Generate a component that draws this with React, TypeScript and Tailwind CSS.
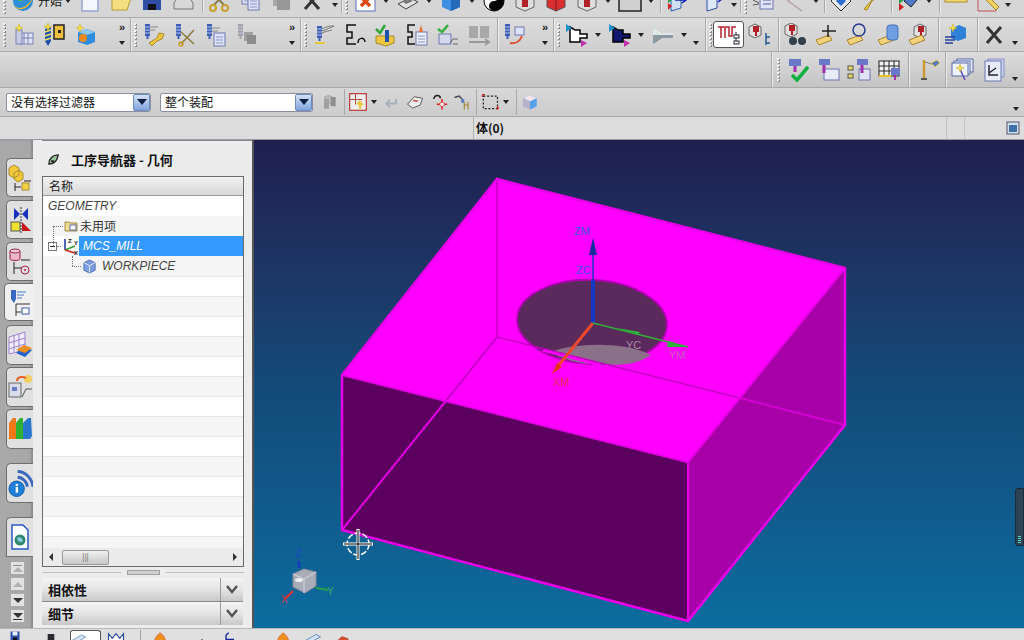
import type { ReactNode } from "react";

const cjk = "font-['Noto_Sans_CJK_SC','Liberation_Sans',sans-serif]";

// little helper for the blue "tool" stack that appears on lots of CAM icons
const Tool = ({ x = 3, y = 1, c = "#3f5fb5" }: { x?: number; y?: number; c?: string }) => (
  <g>
    <rect x={x} y={y} width="5" height="12" fill={c} />
    <path d={`M${x} ${y + 3}h5M${x} ${y + 6}h5M${x} ${y + 9}h5`} stroke="#b8c4e8" />
    <path d={`M${x + 2.5} ${y + 12}v3`} stroke={c} strokeWidth="2" />
  </g>
);
const Tag = () => <path d="M2 17l13-5 3 5-13 5z" fill="#f2d27a" stroke="#a8842c" />;
const Star = ({ x = 8, y = 5 }: { x?: number; y?: number }) => (
  <path d={`M${x} ${y - 4}l1 3 3 1-3 1-1 3-1-3-3-1 3-1z`} fill="#f7e04a" stroke="#c9a820" strokeWidth=".5" />
);
const Doc = ({ x = 8, y = 8, c = "#dfe4f8" }: { x?: number; y?: number; c?: string }) => (
  <g>
    <rect x={x} y={y} width="11" height="13" fill={c} stroke="#6b76b0" />
    <path d={`M${x + 2} ${y + 4}h7M${x + 2} ${y + 7}h7M${x + 2} ${y + 10}h7`} stroke="#8a94c8" />
  </g>
);
const RedBox = ({ x = 5, y = 3 }: { x?: number; y?: number }) => (
  <g>
    <path d={`M${x} ${y + 3}l6-3 6 3v8l-6 3-6-3z`} fill="#e5dede" stroke="#666" />
    <path d={`M${x + 4} ${y + 2}h6v6h-2v4h-2v-4h-2z`} fill="#b02028" />
  </g>
);

const icons: Record<string, ReactNode> = {
  globe: (
    <>
      <circle cx="12" cy="12" r="10" fill="#2f8fd8" />
      <path d="M5 8c5-5 10-3 12 0-3 1-4 4-8 4-2 0-3-2-4-4z" fill="#59b04a" />
      <path d="M3 17c6 4 13 2 19-9-2 9-12 17-19 9z" fill="#f0b428" />
    </>
  ),
  doc: <rect x="4" y="2" width="16" height="20" fill="#f4f6ff" stroke="#9aa4d8" strokeWidth="1.5" />,
  folder: <path d="M3 21V8l4-2 2-3h11l-1 5 3 1-4 12z" fill="#f4de82" stroke="#b89a38" />,
  save: (
    <>
      <rect x="3" y="3" width="18" height="18" fill="#2d4fa8" />
      <rect x="7" y="3" width="10" height="8" fill="#e8ecf8" />
      <rect x="8" y="15" width="8" height="6" fill="#111" />
    </>
  ),
  print: (
    <>
      <path d="M3 14l4-6h11l4 6v6H3z" fill="#d8d8d8" stroke="#777" />
      <path d="M7 8l2-5h9l-1 5z" fill="#fff" stroke="#888" />
    </>
  ),
  scissors: (
    <>
      <path d="M5 3l12 13M19 3L7 16" stroke="#8a7a50" strokeWidth="2" />
      <circle cx="6" cy="19" r="3" fill="none" stroke="#c8a030" strokeWidth="2" />
      <circle cx="18" cy="19" r="3" fill="none" stroke="#c8a030" strokeWidth="2" />
    </>
  ),
  copy: (
    <>
      <Doc x={4} y={2} />
      <Doc x={10} y={8} />
    </>
  ),
  paste: (
    <>
      <rect x="4" y="3" width="13" height="14" fill="#a8a8a8" />
      <rect x="8" y="7" width="13" height="14" fill="#989898" />
    </>
  ),
  x: <path d="M5 4l14 16M19 4L5 20" stroke="#333" strokeWidth="3" />,
  redX: (
    <>
      <rect x="3" y="3" width="19" height="19" fill="#fff" stroke="#5a70c0" />
      <path d="M8 8l9 9M17 8l-9 9" stroke="#e04818" strokeWidth="3.5" />
    </>
  ),
  plate: (
    <>
      <path d="M2 15l12-6 8 4-12 7z" fill="#e4e4e4" stroke="#444" />
      <path d="M7 13l7-3 3 2-7 3z" fill="#777" />
    </>
  ),
  cube: (
    <>
      <path d="M12 3l9 4v11l-9 4-9-4V7z" fill="#3f8fe0" />
      <path d="M12 3l9 4-9 4-9-4z" fill="#a8d4f8" />
      <path d="M12 11v11l9-4V7z" fill="#2468b8" />
    </>
  ),
  ball: (
    <>
      <circle cx="12" cy="12" r="10" fill="#fff" stroke="#000" />
      <path d="M12 2a10 10 0 0 1 0 20 5 5 0 0 1 0-10 5 5 0 0 0 0-10z" fill="#000" />
    </>
  ),
  boxA: (
    <>
      <path d="M3 6l9-4 9 4v12l-9 4-9-4z" fill="#ddd" stroke="#666" />
      <path d="M9 6h6v12H9z" fill="#b02028" />
    </>
  ),
  boxB: (
    <>
      <path d="M3 6l9-4 9 4v12l-9 4-9-4z" fill="#d83030" stroke="#555" />
      <path d="M3 6l9 4 9-4M12 10v12" stroke="#801818" fill="none" />
    </>
  ),
  square: <rect x="1" y="0" width="22" height="22" fill="#cfcfcf" stroke="#222" strokeWidth="1.5" />,
  door: (
    <>
      <path d="M6 4l10-3v18L6 22z" fill="#cfe0f4" stroke="#2d5fb0" />
      <path d="M10 11h11M17 8l4 3-4 3" stroke="#1020c0" strokeWidth="1.5" fill="none" />
      <path d="M3 14l4 3-4 4z" fill="#d02020" />
      <path d="M3 8l4 3-4 3z" fill="#28a040" />
    </>
  ),
  door2: (
    <>
      <path d="M6 4l10-3v18L6 22z" fill="#dfe8f8" stroke="#2d4fb0" />
      <path d="M9 10h12M17 7l4 3-4 3" stroke="#1020c0" strokeWidth="1.5" fill="none" />
    </>
  ),
  list: (
    <>
      <path d="M1 6l6 3M1 11l6 3M1 16l6-1" stroke="#555" />
      <rect x="8" y="2" width="13" height="18" fill="#dfe4f8" stroke="#6b76b0" />
      <path d="M11 7h8M11 11h8M11 15h8" stroke="#4a58a8" />
    </>
  ),
  angle: <path d="M14 3L5 12l14 10" fill="none" stroke="#b8a0a0" strokeWidth="1.5" />,
  diamond: (
    <>
      <path d="M12 2l10 10-10 10L2 12z" fill="#e8e8e8" stroke="#333" />
      <path d="M12 7l5 5-5 5-5-5z" fill="#2f6fd0" />
    </>
  ),
  wrenchPen: (
    <>
      <path d="M4 20l8-9 3-6 5-2-2 5-6 4-5 9z" fill="#eec83a" stroke="#a8882c" />
      <path d="M13 10l8-8" stroke="#2d3f90" strokeWidth="3" />
    </>
  ),
  doorMix: (
    <>
      <path d="M8 12l6-7 7 6-6 7z" fill="#4f78c8" stroke="#222" />
      <path d="M3 14l5 4-5 4z" fill="#d02020" />
      <path d="M3 7l5 4-5 4z" fill="#28a040" />
    </>
  ),
  ruler: (
    <>
      <rect x="1" y="5" width="22" height="8" fill="#f4d870" stroke="#a88c30" />
      <path d="M4 5v3M8 5v3M12 5v3M16 5v3M20 5v3" stroke="#776020" />
    </>
  ),
  setSquare: (
    <>
      <path d="M3 22V4c10 0 18 8 18 18z" fill="none" stroke="#c05050" />
      <path d="M8 2l16 16-3 3L5 5z" fill="#f0d060" stroke="#a08830" />
    </>
  ),
  sparkTable: (
    <>
      <rect x="9" y="10" width="13" height="11" fill="#dfe4f4" stroke="#7a84b8" />
      <path d="M13 10v11M17 10v11M9 15h13" stroke="#7a84b8" />
      <rect x="5" y="7" width="6" height="14" fill="#c8cce0" stroke="#7a84b8" />
      <Star x={8} y={5} />
    </>
  ),
  drill: (
    <>
      <path d="M3 6l6-2v14l-3 5-3-5z" fill="#2050b0" />
      <path d="M3 9l6-2M3 13l6-2M3 17l6-2" stroke="#f0e060" strokeWidth="1.5" />
      <rect x="12" y="2" width="10" height="14" fill="#eec040" stroke="#222" strokeWidth="1.5" />
      <rect x="16" y="7" width="3" height="3" fill="#222" />
      <Star x={6} y={4} />
    </>
  ),
  cubeStar: (
    <>
      <path d="M5 9l9-3 8 3v10l-8 3-9-3z" fill="#2e8cdc" />
      <path d="M5 9l9-3 8 3-8 3z" fill="#8cc8f4" />
      <circle cx="10" cy="15" r="4" fill="#f08a20" />
      <Star x={7} y={5} />
    </>
  ),
  toolWrench: (
    <>
      <Tool x={3} />
      <path d="M8 4h8M8 7h5" stroke="#888" />
      <path d="M7 20l8-5 2-5 5 1-2 5-5 2-5 5z" fill="#eec83a" stroke="#a8882c" />
    </>
  ),
  toolScissors: (
    <>
      <Tool x={3} />
      <path d="M8 21L21 7M8 9l13 12" stroke="#8a7a40" strokeWidth="1.5" />
      <circle cx="8" cy="21" r="2" fill="none" stroke="#c8a030" strokeWidth="1.5" />
    </>
  ),
  toolCopy: (
    <>
      <Tool x={3} />
      <Doc x={10} y={10} />
      <path d="M8 5h8M8 8h6" stroke="#888" />
    </>
  ),
  toolGrey: (
    <>
      <Tool x={3} c="#a4a4a4" />
      <rect x="9" y="9" width="9" height="9" fill="#a0a0a0" />
      <rect x="12" y="12" width="9" height="9" fill="#8c8c8c" />
    </>
  ),
  toolPath: (
    <>
      <Tool x={5} y={3} />
      <path d="M10 6c5-3 9-3 12-3-4 2-7 3-12 5M10 10c4-2 7-2 10-3" stroke="#777" fill="none" />
      <path d="M3 20h10" stroke="#e4c840" strokeWidth="2" />
    </>
  ),
  sArrow: (
    <>
      <path d="M13 2H4v7h5v6H4v6h9" fill="none" stroke="#111" strokeWidth="1.5" />
      <path d="M15 20c0-6 7-6 7-1" fill="none" stroke="#111" strokeWidth="1.5" />
    </>
  ),
  checkBars: (
    <>
      <path d="M2 20V13h18v7l-8 3z" fill="#eec840" stroke="#a8882c" />
      <rect x="11" y="7" width="4" height="12" fill="#2050b0" />
      <path d="M2 6l4 4 5-8" fill="none" stroke="#30a838" strokeWidth="2.5" />
    </>
  ),
  sDoc: (
    <>
      <path d="M10 2H3v7h4v5H3v7h7" fill="none" stroke="#111" strokeWidth="1.5" />
      <Doc x={11} y={9} c="#eef1fb" />
      <path d="M14 9l2-7 2 7z" fill="#e87030" />
    </>
  ),
  checkDoc: (
    <>
      <path d="M3 11h12v10H3z" fill="#d4d8ec" stroke="#6b76b0" />
      <path d="M14 20l3-4h5M17 21h5" stroke="#666" fill="none" />
      <path d="M2 6l4 3 6-7" fill="none" stroke="#38b040" strokeWidth="2.5" />
    </>
  ),
  bookGrey: (
    <>
      <rect x="2" y="3" width="9" height="12" fill="#a8a8a8" />
      <rect x="13" y="3" width="9" height="12" fill="#a8a8a8" />
      <path d="M2 19h20M18 16l4 3-4 3" stroke="#999" strokeWidth="2" fill="none" />
    </>
  ),
  toolRed: (
    <>
      <Tool x={3} />
      <path d="M8 20c6 1 10-2 12-7" stroke="#e05030" strokeWidth="2" fill="none" />
      <rect x="13" y="4" width="9" height="8" fill="#dfe4f8" stroke="#6b76b0" />
    </>
  ),
  punch: (
    <>
      <path d="M5 4l5 3h5v4h7v4h-7v4h-5l-5 0z" fill="#fff" stroke="#000" strokeWidth="1.5" />
      <path d="M1 1l6 4-6 4z" fill="#2090c8" />
      <path d="M16 17l6 3-6 4z" fill="#c030b0" />
    </>
  ),
  punchDark: (
    <>
      <path d="M5 4l5 3h5v4h7v4h-7v4h-5l-5 0z" fill="#101870" stroke="#000" strokeWidth="1.5" />
      <path d="M1 1l6 4-6 4z" fill="#2090c8" />
      <path d="M16 17l6 3-6 4z" fill="#c030b0" />
    </>
  ),
  lathe: (
    <>
      <path d="M2 4c5 3 8 5 9 6h11v5H11c-1 1-4 3-9 6z" fill="#8a9aa0" />
      <path d="M2 4c5 3 8 5 9 6h11v2H2z" fill="#dfe8e8" />
    </>
  ),
  zigTree: (
    <>
      <path d="M1 4h6M4 4v11M8 15V4h4v9h3V4h4" fill="none" stroke="#b02028" strokeWidth="1.5" />
      <path d="M19 9v12" stroke="#223" />
      <rect x="17" y="12" width="5" height="3" fill="#fff" stroke="#223" />
      <rect x="17" y="18" width="5" height="3" fill="#fff" stroke="#223" />
    </>
  ),
  boxTree: (
    <>
      <RedBox x={1} y={1} />
      <path d="M18 10v12M18 14h4M18 20h4" stroke="#245a90" strokeWidth="1.5" />
    </>
  ),
  binoculars: (
    <>
      <RedBox x={2} y={0} />
      <circle cx="10" cy="18" r="4" fill="#33404a" />
      <circle cx="19" cy="18" r="4" fill="#33404a" />
    </>
  ),
  tagPlus: (
    <>
      <Tag />
      <path d="M14 2v12M8 8h14" stroke="#222" strokeWidth="1.5" />
    </>
  ),
  tagCircle: (
    <>
      <Tag />
      <circle cx="14" cy="7" r="6" fill="none" stroke="#223c90" strokeWidth="1.5" />
    </>
  ),
  tagCyl: (
    <>
      <Tag />
      <rect x="11" y="2" width="11" height="15" rx="3" fill="#6f9fe0" stroke="#4070b8" />
    </>
  ),
  tagBox: (
    <>
      <RedBox x={7} y={1} />
      <Tag />
    </>
  ),
  toolCube: (
    <>
      <path d="M8 6l8-4 7 3v10l-8 3-7-3z" fill="#2e80d8" />
      <Star x={10} y={5} />
      <path d="M2 14h10M2 17h10M2 20h8" stroke="#283f98" strokeWidth="1.5" />
    </>
  ),
  millCheck: (
    <>
      <rect x="4" y="1" width="12" height="7" fill="#6a78c8" />
      <path d="M10 8v6" stroke="#a030b0" strokeWidth="3" />
      <path d="M7 17l5 5 11-13" fill="none" stroke="#10b040" strokeWidth="3.5" />
    </>
  ),
  millWin: (
    <>
      <rect x="8" y="11" width="15" height="11" fill="#e8ecf8" stroke="#6b76b0" />
      <rect x="3" y="1" width="11" height="6" fill="#6a78c8" />
      <path d="M8 7v8" stroke="#a030b0" strokeWidth="3" />
    </>
  ),
  millTree: (
    <>
      <rect x="12" y="11" width="11" height="11" fill="#dfe4f8" stroke="#6b76b0" />
      <rect x="1" y="8" width="5" height="4" fill="#eedc60" stroke="#555" />
      <rect x="1" y="16" width="5" height="4" fill="#eedc60" stroke="#555" />
      <rect x="10" y="1" width="11" height="6" fill="#6a78c8" />
      <path d="M15 7v8" stroke="#a030b0" strokeWidth="3" />
    </>
  ),
  tableMill: (
    <>
      <rect x="1" y="3" width="20" height="15" fill="#f4f4f4" stroke="#222" />
      <path d="M1 8h20M1 13h20M6 3v15M11 3v15M16 3v15" stroke="#222" />
      <path d="M1 18h12" stroke="#e8c820" strokeWidth="2" />
      <rect x="13" y="10" width="9" height="7" fill="#6a78c8" />
      <path d="M17 17v5" stroke="#a030b0" strokeWidth="2" />
    </>
  ),
  pole: (
    <>
      <path d="M7 2v19" stroke="#c89c30" strokeWidth="2.5" />
      <path d="M4 21h6" stroke="#555" strokeWidth="2" />
      <path d="M8 4l10 3" stroke="#777" />
      <path d="M14 5l6-3 3 3-5 4z" fill="#5a78c8" stroke="#eec840" />
    </>
  ),
  stack: (
    <>
      <rect x="6" y="1" width="16" height="13" fill="#e8ecf8" stroke="#5a68a8" />
      <rect x="3" y="3" width="16" height="13" fill="#e8ecf8" stroke="#5a68a8" />
      <rect x="1" y="5" width="16" height="13" fill="#f0f2fb" stroke="#5a68a8" />
      <path d="M9 11l5 11" stroke="#5a48b0" strokeWidth="1.5" />
      <Star x={9} y={10} />
    </>
  ),
  chartDoc: (
    <>
      <rect x="6" y="1" width="16" height="18" fill="#c8d0ea" stroke="#8a94c8" />
      <rect x="3" y="3" width="16" height="20" fill="#e8ecf8" stroke="#6b76b0" />
      <path d="M7 7v10h9M7 15l7-5" stroke="#223" strokeWidth="1.5" fill="none" />
    </>
  ),
  sel: (
    <>
      <path d="M8 14l-1-8c3-2 6-2 9 0l-1 8z" fill="#bfbfbf" stroke="#999" />
      <rect x="6" y="8" width="6" height="12" fill="#a0a0a0" />
      <rect x="14" y="6" width="6" height="11" fill="#8f8f8f" />
    </>
  ),
  snap: (
    <>
      <rect x="2" y="2" width="20" height="20" fill="#eee" stroke="#c04040" strokeWidth="1.5" />
      <path d="M9 3v12M3 9h14" stroke="#a02020" />
      <path d="M10 14l4-4 5 5-3 1v4h-3v-4z" fill="#eec840" />
    </>
  ),
  back: <path d="M20 8v6H9M12 9l-5 5 5 5" fill="none" stroke="#a8b0b8" strokeWidth="2.5" />,
  block: (
    <>
      <path d="M2 15l9-10 11 2-3 9-10 4z" fill="#eee" stroke="#333" />
      <path d="M10 9l7 1-2 2-6-1z" fill="#d05050" />
    </>
  ),
  snapArrow: (
    <>
      <path d="M5 8c1-6 8-6 9-1" fill="none" stroke="#222" strokeWidth="2" />
      <path d="M9 15h14M16 8v14" stroke="#e02020" strokeWidth="2" />
      <circle cx="16" cy="15" r="3" fill="#fff" stroke="#e02020" />
    </>
  ),
  snapTree: (
    <>
      <path d="M2 6l6-2 4 4" fill="none" stroke="#445" strokeWidth="2" />
      <rect x="11" y="8" width="4" height="5" fill="#5a78c8" />
      <path d="M15 12v10M20 12v10M15 16h5" stroke="#a08830" strokeWidth="1.5" />
    </>
  ),
  marquee: (
    <>
      <rect x="4" y="5" width="17" height="15" fill="none" stroke="#222" strokeWidth="1.5" strokeDasharray="2.5 2" />
      <path d="M3 3h3M3 3v3M20 19h3M21 17v4" stroke="#d02020" strokeWidth="1.5" />
    </>
  ),
  tinyCube: (
    <>
      <path d="M12 3l9 4v11l-9 4-9-4V7z" fill="#5aa0e8" />
      <path d="M12 3l9 4-9 4-9-4z" fill="#f4e4ee" />
      <path d="M3 7l9 4v11l-9-4z" fill="#f0c0b0" opacity=".6" />
    </>
  ),
  crown: <path d="M2 18V5l5 6 5-6 5 6 5-6v13z" fill="#fff" stroke="#2848a8" strokeWidth="1.5" />,
  flame: <path d="M3 22c0-10 5-14 9-18 5 4 9 8 9 18z" fill="#f09020" stroke="#d05018" />,
  plus: <path d="M12 14v10" stroke="#222" strokeWidth="2" />,
  blueDoor: <path d="M6 22V8l4-4M6 14h12" fill="none" stroke="#1020a0" strokeWidth="2" />,
  redChip: <path d="M3 18l9-8 9 3v9H3z" fill="#d85030" stroke="#a03018" />,
  slab: <path d="M2 14l14-8 6 3-14 8z" fill="#d8e4f4" stroke="#4070c0" />,
  darkBit: <rect x="7" y="6" width="10" height="16" fill="#2a2a30" />,
};

const Ico = ({ n, size = 24 }: { n: string; size?: number }) => (
  <svg viewBox="0 0 24 24" width={size} height={size} className="shrink-0">
    {icons[n]}
  </svg>
);

const Slot = ({ n }: { n: string }) => (
  <div className="flex w-[31px] shrink-0 items-center justify-center">
    <Ico n={n} />
  </div>
);

const Grip = () => (
  <div className="flex h-[28px] w-[7px] shrink-0 flex-col items-center justify-between self-center py-0.5">
    {[0, 1, 2, 3, 4, 5, 6].map((i) => (
      <div key={i} className="h-[2px] w-[2px] bg-[#f4f4f4] shadow-[1px_1px_0_#8c8c8c]" />
    ))}
  </div>
);

const Sep = () => <div className="w-px shrink-0 self-stretch bg-[#a9a9a9] shadow-[1px_0_0_#ececec]" />;

const Tri = () => (
  <div className="h-0 w-0 border-x-[3px] border-t-[4px] border-x-transparent border-t-[#222]" />
);

const Arrow = () => (
  <div className="flex w-[12px] shrink-0 items-center justify-center">
    <Tri />
  </div>
);

// >> on top, drop marker below
const More = () => (
  <div className="flex w-[16px] shrink-0 flex-col items-center justify-between pb-[6px] pt-[4px]">
    <span className="font-['Liberation_Sans',sans-serif] text-[11px] font-bold leading-[10px] text-[#222]">»</span>
    <Tri />
  </div>
);

const Dd = () => (
  <div className="flex w-[12px] shrink-0 flex-col items-center justify-end pb-[6px]">
    <Tri />
  </div>
);

const Select = ({ label, className }: { label: string; className: string }) => (
  <div className={`flex h-[19px] shrink-0 items-center justify-between rounded-[2px] border border-[#8b8fa0] bg-white ${className}`}>
    <span className={`${cjk} pl-1 text-[12px] leading-none text-[#111]`}>{label}</span>
    <div className="flex h-full w-[17px] items-center justify-center rounded-[2px] border border-[#6c8cc0] bg-gradient-to-b from-[#d4e2f6] to-[#7ea4dc]">
      <div className="h-0 w-0 border-x-[5px] border-t-[6px] border-x-transparent border-t-[#102040]" />
    </div>
  </div>
);

const railTabs = [
  { cls: "mt-[18px] h-[39px] w-[27px] bg-[#e0e0e0]", icon: <TabPart /> },
  { cls: "mt-[3px] h-[39px] w-[27px] bg-[#e0e0e0]", icon: <TabAssy /> },
  { cls: "mt-[3px] h-[39px] w-[27px] bg-[#e0e0e0]", icon: <TabCyl /> },
  { cls: "-ml-[2px] mt-[2px] h-[38px] w-[29px] bg-[#f0f0f0] pl-[3px]", icon: <TabOp /> },
  { cls: "mt-[4px] h-[40px] w-[27px] bg-[#e0e0e0]", icon: <TabTable /> },
  { cls: "mt-[2px] h-[40px] w-[27px] bg-[#e0e0e0]", icon: <TabMachine /> },
  { cls: "mt-[2px] h-[40px] w-[27px] bg-[#e0e0e0]", icon: <TabBooks /> },
  { cls: "mt-[14px] h-[40px] w-[27px] bg-[#e0e0e0]", icon: <TabInfo /> },
];

function TabPart() {
  return (
    <svg viewBox="0 0 24 28" width="24" height="28">
      <path d="M1 4l5-3 5 3v7l-5 3-5-3zM6 9l5-3 4 3v6l-5 3-4-3z" fill="#f0c838" stroke="#a88c30" />
      <path d="M7 19v8M7 23h6M16 17h7" stroke="#222" />
      <rect x="14" y="19" width="7" height="7" fill="#f0d040" stroke="#a88c30" />
    </svg>
  );
}
function TabAssy() {
  return (
    <svg viewBox="0 0 24 28" width="24" height="28">
      <path d="M6 2l6 6-6 6zM20 2l-6 6 6 6z" fill="#1830c0" />
      <path d="M13 1v26" stroke="#333" strokeDasharray="2 1" />
      <rect x="3" y="16" width="9" height="9" fill="#f0e030" stroke="#555" />
      <path d="M14 16l9 9h-9z" fill="#c81818" />
    </svg>
  );
}
function TabCyl() {
  return (
    <svg viewBox="0 0 24 28" width="24" height="28">
      <path d="M2 3h10v8c0 2-10 2-10 0z" fill="#eeb8c8" stroke="#a02050" />
      <ellipse cx="7" cy="3" rx="5" ry="2" fill="#f4d0dc" stroke="#a02050" />
      <path d="M6 14v12M6 20h8M13 12h9" stroke="#222" />
      <circle cx="17" cy="22" r="4" fill="none" stroke="#b02050" />
      <circle cx="17" cy="22" r="1" fill="#b02050" />
    </svg>
  );
}
function TabOp() {
  return (
    <svg viewBox="0 0 24 28" width="24" height="28">
      <path d="M3 2v9l3 4 2-4V2z" fill="#3868c0" />
      <path d="M9 4h9M9 7h7M9 10h5" stroke="#4878c8" />
      <path d="M8 16h14M8 16v12M8 24h5" stroke="#333" />
      <rect x="14" y="20" width="7" height="6" fill="#fff" stroke="#3858a8" />
    </svg>
  );
}
function TabTable() {
  return (
    <svg viewBox="0 0 24 28" width="24" height="28">
      <path d="M1 6l16-5v18L1 23z" fill="#eeeeff" stroke="#a080d0" />
      <path d="M1 12l16-5M1 18l16-5M6 4v17M11 3v17" stroke="#a080d0" />
      <path d="M8 22l8-6 8 3-7 7z" fill="#2060d0" />
      <path d="M8 19l8-5 8 3-7 5z" fill="#f09020" />
    </svg>
  );
}
function TabMachine() {
  return (
    <svg viewBox="0 0 24 28" width="24" height="28">
      <rect x="1" y="10" width="12" height="14" fill="#d8dce8" stroke="#666" />
      <rect x="4" y="14" width="5" height="4" fill="#6a78c8" />
      <path d="M14 24l4-8h6" stroke="#555" fill="none" />
      <circle cx="20" cy="6" r="4" fill="#f4d060" />
      <path d="M9 8c0-4 5-5 9-3" fill="none" stroke="#e86020" strokeWidth="2" />
    </svg>
  );
}
function TabBooks() {
  return (
    <svg viewBox="0 0 24 28" width="24" height="28">
      <path d="M1 8l4-5h3v21H1z" fill="#f07818" />
      <path d="M8 8l4-5h3v21H8z" fill="#30b030" />
      <path d="M15 8l5-5h3l1 18-2 3h-7z" fill="#2878d0" />
    </svg>
  );
}
function TabInfo() {
  return (
    <svg viewBox="0 0 26 30" width="26" height="30">
      <path d="M10 3c8 0 15 7 16 16M10 9c5 0 10 5 10 10" fill="none" stroke="#3868c0" strokeWidth="3" />
      <circle cx="9" cy="21" r="8" fill="#2080d8" stroke="#1858a8" />
      <rect x="8" y="19" width="2.5" height="6" fill="#fff" />
      <rect x="8" y="16" width="2.5" height="2" fill="#fff" />
    </svg>
  );
}

const rowLabel = "font-['Liberation_Sans',sans-serif] text-[12px] italic text-[#444]";

const TreeIconFolder = () => (
  <svg viewBox="0 0 14 14" width="14" height="14" className="shrink-0">
    <path d="M1 12V3h4l1 1h7v8z" fill="#f0dc90" stroke="#a08c40" />
    <rect x="6" y="6" width="6" height="5" fill="#fff" stroke="#5a68a8" />
  </svg>
);
const TreeIconMcs = () => (
  <svg viewBox="0 0 18 18" width="18" height="18" className="shrink-0">
    <path d="M4 2v11" stroke="#1830a0" strokeWidth="1.5" />
    <path d="M4 13l10-4" stroke="#30a030" strokeWidth="1.5" />
    <path d="M4 13l10 3" stroke="#d02020" strokeWidth="1.5" />
    <text x="7" y="6" fontSize="6" fontWeight="700" fill="#111" fontFamily="Liberation Sans">Z</text>
    <text x="13" y="8" fontSize="6" fontWeight="700" fill="#111" fontFamily="Liberation Sans">Y</text>
    <text x="13" y="18" fontSize="6" fontWeight="700" fill="#111" fontFamily="Liberation Sans">X</text>
  </svg>
);
const TreeIconCube = () => (
  <svg viewBox="0 0 16 16" width="15" height="15" className="shrink-0">
    <path d="M8 1l6 3v8l-6 3-6-3V4z" fill="#7c9ce0" stroke="#5070b8" />
    <path d="M2 4l6 3 6-3M8 7v8" stroke="#dfe8fb" fill="none" />
  </svg>
);

function TreePanel() {
  const blanks = Array.from({ length: 14 }, (_, i) => i);
  return (
    <div className="flex h-[391px] w-[202px] flex-col border border-[#6a6a6a] bg-white">
      <div className={`${cjk} flex h-[19px] shrink-0 items-center border-b border-[#9a9a9a] bg-gradient-to-b from-[#f2f2f2] to-[#d8d8d8] pl-[6px] text-[12px] text-[#222]`}>
        名称
      </div>
      <div className="flex-1 overflow-hidden">
        <div className="flex h-[20px] items-center pl-[5px]">
          <span className={rowLabel}>GEOMETRY</span>
        </div>
        <div className="relative flex h-[20px] items-center gap-[2px] bg-[#f5f5f5] pl-[21px]">
          <TreeIconFolder />
          <span className={`${cjk} text-[12px] text-[#333]`}>未用项</span>
          <div className="absolute left-[10px] top-[10px] h-[20px] border-l border-dotted border-[#777]" />
          <div className="absolute left-[10px] top-[10px] w-[10px] border-t border-dotted border-[#777]" />
        </div>
        <div className="flex h-[20px] items-center bg-white pl-[5px]">
          <div className="flex h-[9px] w-[9px] shrink-0 items-center justify-center border border-[#777] bg-white">
            <div className="h-px w-[5px] bg-[#333]" />
          </div>
          <div className="w-[4px] border-t border-dotted border-[#777]" />
          <TreeIconMcs />
          <div className="flex h-full flex-1 items-center bg-[#3399ff] pl-[4px]">
            <span className="font-['Liberation_Sans',sans-serif] text-[12px] italic text-white">MCS_MILL</span>
          </div>
        </div>
        <div className="relative flex h-[20px] items-center gap-[5px] bg-[#f5f5f5] pl-[39px]">
          <TreeIconCube />
          <span className={rowLabel}>WORKPIECE</span>
          <div className="absolute left-[29px] top-0 h-[10px] border-l border-dotted border-[#777]" />
          <div className="absolute left-[29px] top-[10px] w-[9px] border-t border-dotted border-[#777]" />
        </div>
        {blanks.map((i) => (
          <div key={i} className={`h-[20px] border-t border-[#e8e8e8] ${i % 2 === 0 ? "bg-white" : "bg-[#f5f5f5]"}`} />
        ))}
      </div>
      <div className="flex h-[18px] shrink-0 items-center bg-[#ebebeb] px-[6px]">
        <div className="h-0 w-0 border-y-[4px] border-r-[4px] border-y-transparent border-r-[#333]" />
        <div className="ml-[9px] flex h-[15px] w-[47px] items-center justify-center rounded-[2px] border border-[#9a9a9a] bg-gradient-to-b from-[#f0f0f0] to-[#c8c8c8] text-[8px] leading-none text-[#555]">
          |||
        </div>
        <div className="ml-auto h-0 w-0 border-y-[4px] border-l-[4px] border-y-transparent border-l-[#333]" />
      </div>
    </div>
  );
}

const Accordion = ({ label }: { label: string }) => (
  <div className="flex h-[23px] w-[201px] shrink-0 items-center justify-between bg-gradient-to-b from-[#f4f4f4] via-[#e4e4e4] to-[#c8c8c8]">
    <span className={`${cjk} pl-[6px] text-[13px] font-bold text-[#111]`}>{label}</span>
    <div className="flex h-full w-[23px] items-center justify-center border-l border-[#9a9a9a]">
      <svg viewBox="0 0 12 10" width="12" height="10">
        <path d="M1 1l5 6 5-6" fill="none" stroke="#555" strokeWidth="2.5" />
      </svg>
    </div>
  </div>
);

const PageBtn = ({ up, bar }: { up?: boolean; bar?: boolean }) => (
  <div className="flex h-[14px] w-[15px] flex-col items-center justify-center gap-px border border-[#aaa] bg-[#e2e2e2]">
    {bar && up && <div className="h-px w-[9px] bg-[#8f8f8f]" />}
    {up ? (
      <div className="h-0 w-0 border-x-[5px] border-b-[5px] border-x-transparent border-b-[#b0b0b0]" />
    ) : (
      <div className="h-0 w-0 border-x-[5px] border-t-[5px] border-x-transparent border-t-[#333]" />
    )}
    {bar && !up && <div className="h-px w-[9px] bg-[#333]" />}
  </div>
);

// the part and its triad, drawn in page-relative canvas coords
function Viewport() {
  return (
    <div className="relative flex-1 overflow-hidden bg-gradient-to-b from-[#1f1f50] via-[#124a78] to-[#0b6c9f]">
      <svg viewBox="254 140 770 488" className="block h-full w-full">
        <path d="M342 375L688 462V621L342 530z" fill="#5c0060" />
        <path d="M497 337L342 530 342 375z" fill="#5c0060" />
        <path d="M845 268V425L688 621V462z" fill="#a800a8" />
        <path d="M497 179L845 268 688 463 342 375z" fill="#ff00ff" />
        <ellipse cx="592" cy="322" rx="75" ry="42" fill="#5a2a5c" stroke="#b400b4" strokeWidth="2" transform="rotate(3 592 322)" />
        <path d="M551 352c20-8 70-12 100 3-18 12-36 10-60 9-14-1-30-5-40-12z" fill="#8a7088" />
        <path d="M543 350L600 365" stroke="#ff00ff" strokeWidth="3" />
        <g fill="none">
          <path d="M497 179V337" strokeWidth="1.5" stroke="#c400c4" />
          <path d="M497 337L445 402" strokeWidth="2" stroke="#c400c4" />
          <path d="M445 402L342 530" strokeWidth="2" stroke="#e000e0" />
          <path d="M497 337L740 398" strokeWidth="1.5" stroke="#c400c4" />
          <path d="M740 398L845 425" strokeWidth="1.5" stroke="#e000e0" />
          <path d="M497 179L845 268V425L688 621 342 530V375z" strokeWidth="2.5" stroke="#e800e8" />
          <path d="M342 375L688 462 845 268M688 462V621" strokeWidth="2" stroke="#e800e8" />
        </g>
        <path d="M593 323V255" stroke="#1838c0" strokeWidth="1.5" />
        <path d="M593 238l-4 17h8z" fill="#0c2c9c" />
        <path d="M591 323V280h4v43z" fill="#1838c0" />
        <path d="M593 323L558 366" stroke="#f04828" strokeWidth="3" />
        <path d="M552 374l5-11 5 4z" fill="#e03020" />
        <path d="M593 323L688 347" stroke="#30b038" strokeWidth="1.5" />
        <path d="M618 328l22 4-2 3z" fill="#30b038" />
        <path d="M688 347l-20-6-1 6z" fill="#30b038" />
        <g fontFamily="Liberation Sans" fontSize="11">
          <text x="574" y="235" fill="#3858d8">ZM</text>
          <text x="576" y="274" fill="#4050e0">ZC</text>
          <text x="626" y="349" fill="#a08ca0">YC</text>
          <text x="669" y="359" fill="#c060c0">YM</text>
          <text x="553" y="386" fill="#e83060">XM</text>
        </g>
        <circle cx="358" cy="544" r="11" fill="none" stroke="#fff" strokeWidth="1.5" strokeDasharray="6 2" />
        <path d="M343 544h30M358 529v31" stroke="#fff" strokeWidth="3" />
        <path d="M344 544h28M358 530v29" stroke="#000" strokeWidth="1" />
        <path d="M293 574l11-5 12 3v14l-11 7-12-6z" fill="#a9adb8" stroke="#8a8a98" />
        <path d="M293 574l11 5 12-7M304 579v14" stroke="#d4d4dc" fill="none" />
        <ellipse cx="299" cy="580" rx="4" ry="2" fill="#eee" />
        <path d="M299 568v-7" stroke="#1838c0" strokeWidth="2.5" />
        <path d="M316 588l12 2" stroke="#28a048" strokeWidth="2" />
        <path d="M293 591l-8 8" stroke="#e03030" strokeWidth="2" />
        <g fontFamily="Liberation Sans" fontSize="10">
          <text x="296" y="557" fill="#1848c0">Z</text>
          <text x="327" y="595" fill="#40a860">Y</text>
          <text x="281" y="603" fill="#d83848">X</text>
        </g>
      </svg>
      <div className="absolute right-0 top-[348px] flex h-[58px] w-[9px] flex-col justify-end gap-px rounded-l-[3px] border border-[#1c2a3a] bg-[#2e4256] p-[2px]">
        <div className="h-px w-full bg-[#60d8c0]" />
        <div className="h-px w-full bg-[#60d8c0]" />
        <div className="h-px w-full bg-[#60d8c0]" />
        <div className="h-px w-full bg-[#60d8c0]" />
      </div>
    </div>
  );
}

export default function App() {
  return (
    <div className={`flex h-[640px] w-[1024px] flex-col overflow-hidden bg-[#d4d4d4] ${cjk}`}>
      {/* standard bar, cut off by the top of the shot */}
      <div className="flex h-[18px] shrink-0 items-end overflow-hidden border-b border-[#ababab] bg-[#d6d6d6] pb-[4px]">
        <div className="flex h-[24px] w-full shrink-0 items-stretch">
          <Grip />
          <Slot n="globe" />
          <span className="flex w-[24px] shrink-0 items-center text-[12px] text-[#111]">开始</span>
          <Arrow />
          <Slot n="doc" />
          <Slot n="folder" />
          <Slot n="save" />
          <Slot n="print" />
          <div className="w-[4px] shrink-0" />
          <Sep />
          <Slot n="scissors" />
          <Slot n="copy" />
          <Slot n="paste" />
          <Slot n="x" />
          <div className="w-[2px] shrink-0" />
          <Dd />
          <Sep />
          <Grip />
          <Slot n="redX" />
          <Arrow />
          <Slot n="plate" />
          <Arrow />
          <Slot n="cube" />
          <Arrow />
          <Slot n="ball" />
          <Slot n="boxA" />
          <Slot n="boxB" />
          <Slot n="boxA" />
          <Arrow />
          <Slot n="square" />
          <Arrow />
          <div className="w-[3px] shrink-0" />
          <Sep />
          <Slot n="door" />
          <div className="w-[5px] shrink-0" />
          <Slot n="door2" />
          <Dd />
          <Sep />
          <Grip />
          <Slot n="list" />
          <Slot n="angle" />
          <Arrow />
          <div className="w-[2px] shrink-0" />
          <Sep />
          <Slot n="diamond" />
          <Slot n="wrenchPen" />
          <div className="w-[4px] shrink-0" />
          <Sep />
          <Slot n="doorMix" />
          <Arrow />
          <div className="w-[4px] shrink-0" />
          <Sep />
          <Slot n="ruler" />
          <Slot n="setSquare" />
          <Dd />
        </div>
      </div>

      {/* cam bars */}
      <div className="flex h-[34px] shrink-0 items-stretch border-b border-[#ababab] bg-gradient-to-b from-[#dcdcdc] to-[#cfcfcf]">
        <Grip />
        <Slot n="sparkTable" />
        <Slot n="drill" />
        <Slot n="cubeStar" />
        <div className="w-[14px] shrink-0" />
        <More />
        <Sep />
        <Grip />
        <Slot n="toolWrench" />
        <Slot n="toolScissors" />
        <Slot n="toolCopy" />
        <Slot n="toolGrey" />
        <div className="w-[22px] shrink-0" />
        <More />
        <Sep />
        <Grip />
        <Slot n="toolPath" />
        <Slot n="sArrow" />
        <Slot n="checkBars" />
        <Slot n="sDoc" />
        <Slot n="checkDoc" />
        <Slot n="bookGrey" />
        <div className="w-[3px] shrink-0" />
        <Sep />
        <Slot n="toolRed" />
        <div className="w-[8px] shrink-0" />
        <More />
        <Sep />
        <Grip />
        <Slot n="punch" />
        <Arrow />
        <Slot n="punchDark" />
        <Arrow />
        <Slot n="lathe" />
        <Arrow />
        <Dd />
        <div className="w-[3px] shrink-0" />
        <Sep />
        <Grip />
        <div className="my-[3px] flex w-[31px] shrink-0 items-center justify-center rounded-[3px] border border-[#555] bg-white">
          <Ico n="zigTree" />
        </div>
        <Slot n="boxTree" />
        <div className="w-[3px] shrink-0" />
        <Sep />
        <Slot n="binoculars" />
        <Slot n="tagPlus" />
        <Slot n="tagCircle" />
        <Slot n="tagCyl" />
        <Slot n="tagBox" />
        <div className="w-[4px] shrink-0" />
        <Sep />
        <Slot n="toolCube" />
        <div className="w-[7px] shrink-0" />
        <Sep />
        <Slot n="x" />
        <Dd />
      </div>

      <div className="flex h-[35px] shrink-0 items-stretch justify-end bg-gradient-to-b from-[#dcdcdc] to-[#c4c4c4] pr-[3px]">
        <Sep />
        <div className="w-[2px] shrink-0" />
        <Grip />
        <Slot n="millCheck" />
        <Slot n="millWin" />
        <Slot n="millTree" />
        <Slot n="tableMill" />
        <div className="w-[3px] shrink-0" />
        <Sep />
        <div className="w-[4px] shrink-0" />
        <Slot n="pole" />
        <div className="w-px shrink-0" />
        <Sep />
        <div className="w-px shrink-0" />
        <Slot n="stack" />
        <Slot n="chartDoc" />
        <Dd />
      </div>

      {/* selection bar */}
      <div className="flex h-[30px] shrink-0 items-center border-y border-[#a8a8a8] bg-gradient-to-b from-[#d8d8d8] to-[#cccccc] pl-[6px] pr-[3px]">
        <Select label="没有选择过滤器" className="w-[145px]" />
        <Select label="整个装配" className="ml-[9px] w-[153px]" />
        <div className="flex w-[31px] shrink-0 justify-center">
          <Ico n="sel" size={20} />
        </div>
        <div className="h-[26px] w-px shrink-0 bg-[#a9a9a9]" />
        <div className="flex w-[26px] shrink-0 justify-center">
          <Ico n="snap" size={20} />
        </div>
        <Tri />
        <div className="flex w-[26px] shrink-0 justify-center">
          <Ico n="back" size={18} />
        </div>
        <div className="flex w-[24px] shrink-0 justify-center">
          <Ico n="block" size={18} />
        </div>
        <div className="flex w-[24px] shrink-0 justify-center">
          <Ico n="snapArrow" size={18} />
        </div>
        <div className="flex w-[22px] shrink-0 justify-center">
          <Ico n="snapTree" size={18} />
        </div>
        <div className="ml-[3px] h-[26px] w-px shrink-0 bg-[#a9a9a9]" />
        <div className="flex w-[26px] shrink-0 justify-center">
          <Ico n="marquee" size={20} />
        </div>
        <Tri />
        <div className="ml-[7px] h-[26px] w-px shrink-0 bg-[#a9a9a9]" />
        <div className="ml-[1px] flex w-[24px] shrink-0 justify-center">
          <Ico n="tinyCube" size={18} />
        </div>
        <div className="ml-auto self-end pb-[5px] pr-[2px]">
          <Tri />
        </div>
      </div>

      {/* status strip */}
      <div className="flex h-[23px] shrink-0 items-stretch border-b border-[#9a9aa8] bg-[#dcdcdc]">
        <div className="w-[473px] shrink-0" />
        <div className="flex w-[473px] shrink-0 items-center border-l border-[#b4b4b4] pl-[2px] text-[12px] font-bold text-[#111]">
          体(0)
        </div>
        <div className="w-[19px] shrink-0 border-x border-[#c4c4c4]" />
        <div className="flex flex-1 items-center justify-end pr-[3px]">
          <svg viewBox="0 0 16 16" width="16" height="16">
            <rect x="2" y="2" width="12" height="12" fill="#cfe0f0" stroke="#556" />
            <rect x="4" y="5" width="8" height="7" fill="#3f70a8" />
          </svg>
        </div>
      </div>

      <div className="flex min-h-0 flex-1">
        {/* tab rail */}
        <div className="relative z-10 flex w-[33px] shrink-0 flex-col bg-[#a8a8a8] pl-[6px] shadow-[inset_-2px_0_2px_#8c8c8c]">
          {railTabs.map((t, i) => (
            <div
              key={i}
              className={`flex items-center overflow-hidden rounded-l-[5px] border border-r-0 border-[#6e6e6e] pl-[1px] ${t.cls}`}
            >
              {t.icon}
            </div>
          ))}
          <div className="mt-[14px] flex h-[40px] w-[27px] items-center justify-center rounded-tl-[5px] border border-r-0 border-[#6e6e6e] bg-[#e0e0e0]">
            <svg viewBox="0 0 20 26" width="20" height="26">
              <path d="M2 1h11l5 5v19H2z" fill="#fff" stroke="#2858c8" strokeWidth="1.5" />
              <circle cx="10" cy="16" r="5.5" fill="#2f8a70" />
              <path d="M7 14c3-2 5 0 6 3-3 2-5 1-6-3z" fill="#8cc8e8" />
            </svg>
          </div>
          <div className="ml-[4px] mt-[4px] flex flex-col gap-[2px]">
            <PageBtn up bar />
            <PageBtn up />
            <PageBtn />
            <PageBtn bar />
          </div>
        </div>

        {/* navigator */}
        <div className="flex w-[221px] shrink-0 flex-col border-r-2 border-[#555] bg-[#ececec] pl-[9px]">
          <div className="flex h-[36px] shrink-0 items-center border-t border-[#888] pl-[5px] pt-[2px]">
            <svg viewBox="0 0 14 14" width="13" height="13" className="shrink-0">
              <path d="M2 12c0-6 4-10 10-10-1 7-4 10-10 10z" fill="#9ac89a" stroke="#222" strokeWidth="1.5" />
              <circle cx="6" cy="9" r="1.5" fill="#222" />
            </svg>
            <span className="ml-[11px] text-[13px] font-bold text-[#111]">工序导航器 - 几何</span>
          </div>
          <TreePanel />
          <div className="flex h-[11px] w-[202px] shrink-0 items-center justify-center">
            <div className="h-px flex-1 bg-[#c0c0c0]" />
            <div className="mx-[6px] h-[5px] w-[33px] border border-[#a0a0a0] bg-[#d0d0d0]" />
            <div className="h-px flex-1 bg-[#c0c0c0]" />
          </div>
          <Accordion label="相依性" />
          <div className="h-px w-[201px] shrink-0 bg-[#888]" />
          <Accordion label="细节" />
        </div>

        <Viewport />
      </div>

      {/* bottom bar, only the tops of the icons are in the shot */}
      <div className="flex h-[12px] shrink-0 items-start overflow-hidden border-t border-[#b8b8b8] bg-[#e0e0e0] pl-[9px] pt-[1px]">
        <div className="w-[34px] shrink-0">
          <Ico n="save" size={12} />
        </div>
        <div className="w-[27px] shrink-0">
          <Ico n="darkBit" size={16} />
        </div>
        <div className="h-[12px] w-[31px] shrink-0 rounded-t-[3px] border border-b-0 border-[#555] bg-white">
          <Ico n="slab" size={16} />
        </div>
        <div className="ml-[6px] w-[33px] shrink-0">
          <Ico n="crown" size={18} />
        </div>
        <div className="h-[12px] w-px shrink-0 bg-[#a0a0a0]" />
        <div className="ml-[11px] w-[42px] shrink-0">
          <Ico n="flame" size={16} />
        </div>
        <div className="w-[28px] shrink-0">
          <Ico n="plus" size={16} />
        </div>
        <div className="w-[53px] shrink-0">
          <Ico n="blueDoor" size={16} />
        </div>
        <div className="w-[29px] shrink-0">
          <Ico n="flame" size={16} />
        </div>
        <div className="w-[30px] shrink-0">
          <Ico n="slab" size={18} />
        </div>
        <Ico n="redChip" size={16} />
      </div>
    </div>
  );
}
